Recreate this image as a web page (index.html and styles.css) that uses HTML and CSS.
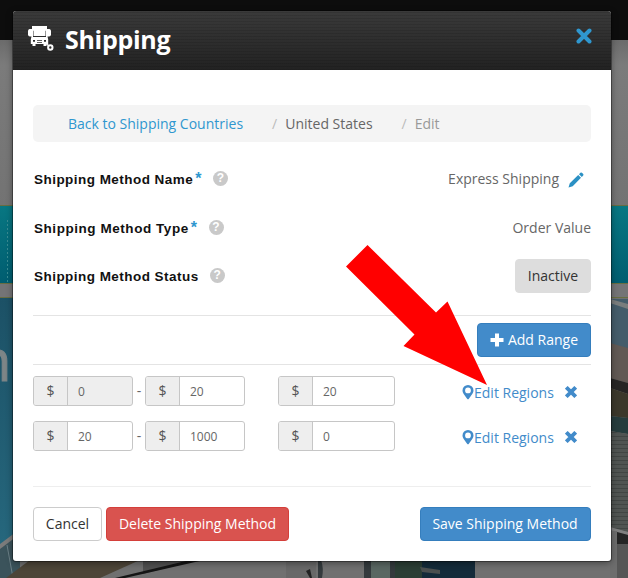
FILE: index.html
```html
<!DOCTYPE html>
<html lang="en">
<head>
<meta charset="utf-8">
<title>Shipping</title>
<link rel="stylesheet" href="styles.css">
</head>
<body>
<svg class="backdrop" width="628" height="578" viewBox="0 0 628 578" aria-hidden="true">
  <defs>
    <linearGradient id="wall" x1="0" y1="0" x2="0" y2="1"><stop offset="0" stop-color="#6b6b6b"/><stop offset=".15" stop-color="#7b7b7b"/><stop offset="1" stop-color="#737373"/></linearGradient>
    <linearGradient id="band" x1="0" y1="0" x2="0" y2="1"><stop offset="0" stop-color="#087782"/><stop offset="1" stop-color="#005d70"/></linearGradient>
    <linearGradient id="sign" x1="0" y1="0" x2="0" y2="1"><stop offset="0" stop-color="#1c5166"/><stop offset="1" stop-color="#276a80"/></linearGradient>
    <pattern id="slats" width="4" height="4" patternUnits="userSpaceOnUse"><path fill="#505452" d="M0 0h4v4H0z"/><path fill="#414543" d="M0 0h4v1H0z"/></pattern>
  </defs>
  <path fill="url(#wall)" d="M0 40h628v166H0z"/>
  <path fill="#0d0d0d" d="M0 0h628v40H0z"/>
  <path fill="url(#band)" d="M0 206h628v77H0z"/>
  <path fill="#686d42" d="M0 205h628v1H0zM0 283h628v1H0z"/>
  <path fill="#747476" d="M0 284h628v13H0z"/>
  <path stroke="#388b92" stroke-dasharray="2 2" d="M7.500 220v62"/>
  <path fill="url(#sign)" d="M0 298h20v280H0z"/>
  <path fill="#686d42" d="M0 297h628v1H0z"/>
  <text class="sign-letter" x="-24" y="381">n</text>
  <path fill="#3b535b" d="M0 548l20-16v46H0z"/>
  <path fill="#7b7b7b" d="M0 544l20-15v5L0 549z"/>
  <path stroke="#6c8188" d="M7 545l6 33"/>
  <path fill="#4d4538" d="M6 578l24-18h116v18z"/>
  <path fill="#707070" d="M140 560h488v18H100z"/>
  <path fill="#505050" d="M143 560h55l-55 14z"/>
  <path fill="#151515" d="M190 560h14l-79 18h-10z"/>
  <path fill="#686868" d="M286 560h30v18h-30z"/>
  <path fill="#343a3d" d="M318 560h3q3 8 1 18h-4zM364 560h7v18h-7zM390 560h5v18h-5z"/>
  <path fill="#596762" d="M371 560h19v18h-19z"/>
  <path fill="#2b3e35" d="M395 560h27v18h-27z"/>
  <path fill="#142b3a" d="M422 560h53v18h-53z"/>
  <path fill="#4b5050" d="M420 567l20 3v4l-18-2z"/>
  <path fill="#222" d="M306 571l4-2 2 9h-2z"/>
  <g>
    <path fill="#445c6a" d="M610 299h18v50h-18z"/>
    <path fill="#747476" d="M610 284h18v12h-18z"/>
    <path fill="#7a7d7d" d="M610 299l18 5v5l-18-6z"/>
    <path fill="#615954" d="M610 343l18 5v35l-18-5z"/>
    <path fill="#262524" d="M610 378l18 5v11l-18-6z"/>
    <path fill="#3b382b" d="M610 388l18 6v24l-18-2z"/>
    <path fill="#263c3d" d="M610 416l18 2v16l-18-3z"/>
    <path fill="url(#slats)" d="M610 431l18 3v98l-18-4z"/>
    <path fill="#808080" d="M610 527l18 5v3l-18-5z"/>
    <path fill="#252525" d="M617 532l11 3v9h-11z"/>
    <path fill="#6d6d6d" d="M610 531h7v47h-7z"/>
    <path fill="#565656" d="M617 544h11v34h-11z"/>
  </g>
</svg>

<main class="modal">
  <header class="modal-header">
    <svg class="truck" width="27" height="26" viewBox="0 0 27 26" aria-hidden="true">
      <path fill="#fff" fill-rule="evenodd" d="M4 0h15v3h2.500Q23 3.500 23 5v4q-.5 1.500-2.500 1.500h-1l.7 3V18h-1.700v2h-3v-2h-8v2h-3v-2H2.800v-4.500l.7-3h-1Q.5 10.500 0 9V5q0-1.500 1.500-2H4zM5 4.800V11h13V4.800zM5 14v1.800h2V14zm11 0v1.800h2V14zM9 14v.8h5V14zm0 2v.8h5V16z"/>
      <path fill="#fff" d="M5.500 4h12v6h-12z"/>
      <path stroke="#fff" stroke-width="1.400" d="M18 17.500l3 2.500"/>
      <circle cx="22.300" cy="21.500" r="2.200" fill="#2c2c2c" stroke="#fff" stroke-width="2"/>
    </svg>
    <h1>Shipping</h1>
    <svg class="close" width="16" height="16" viewBox="0 0 16 16" aria-label="Close"><path d="M2.500 2.500l11 11m0-11l-11 11" stroke="#2f97cf" stroke-width="4" stroke-linecap="round"/></svg>
  </header>
  <section class="modal-body">
    <nav class="breadcrumb"><a>Back to Shipping Countries</a><i>/</i><span>United States</span><i>/</i><em>Edit</em></nav>
    <div class="field name"><label>Shipping Method Name<b>*</b></label><span class="help">?</span><span class="value">Express Shipping</span>
      <svg class="pencil" width="16" height="16" viewBox="0 0 16 16" aria-hidden="true"><path fill="#2b91c4" d="M.5 15.500l1.300-4.300L10.200 3 13 5.800l-8.300 8.400zM11 2.200l1.400-1.400q.8-.6 1.500 0l1.300 1.300q.6.700 0 1.500L13.800 5z"/></svg>
    </div>
    <div class="field type"><label>Shipping Method Type<b>*</b></label><span class="help">?</span><span class="value">Order Value</span></div>
    <div class="field status"><label>Shipping Method Status</label><span class="help">?</span><button class="btn inactive">Inactive</button></div>
    <div class="add-row"><button class="btn primary add"><svg width="14" height="14" viewBox="0 0 14 14" aria-hidden="true"><path fill="#fff" d="M5 .5h4V5h4.500v4H9v4.500H5V9H.5V5H5z"/></svg>Add Range</button></div>
    <div class="range">
      <div class="group off"><span>$</span><div>0</div></div><span class="dash">-</span>
      <div class="group"><span>$</span><div>20</div></div>
      <div class="group price"><span>$</span><div>20</div></div>
      <a class="regions"><svg width="12" height="15" viewBox="0 0 12 15" aria-hidden="true"><path fill="#428bca" fill-rule="evenodd" d="M6 0a5.500 5.500 0 0 1 5.500 5.500c0 3-2.500 5-5 8.700h-1C3 10.500.5 8.500.5 5.500A5.500 5.500 0 0 1 6 0zm0 2.500a2.900 2.900 0 1 0 0 5.800 2.900 2.900 0 0 0 0-5.800z"/></svg>Edit Regions</a>
      <svg class="remove" width="12" height="12" viewBox="0 0 12 12" aria-hidden="true"><path stroke="#428bca" stroke-width="3.800" d="M1.300 1.300l9.400 9.400m0-9.400l-9.400 9.400"/></svg>
    </div>
    <div class="range">
      <div class="group"><span>$</span><div>20</div></div><span class="dash">-</span>
      <div class="group"><span>$</span><div>1000</div></div>
      <div class="group price"><span>$</span><div>0</div></div>
      <a class="regions"><svg width="12" height="15" viewBox="0 0 12 15" aria-hidden="true"><path fill="#428bca" fill-rule="evenodd" d="M6 0a5.500 5.500 0 0 1 5.500 5.500c0 3-2.500 5-5 8.700h-1C3 10.500.5 8.500.5 5.500A5.500 5.500 0 0 1 6 0zm0 2.500a2.900 2.900 0 1 0 0 5.800 2.900 2.900 0 0 0 0-5.800z"/></svg>Edit Regions</a>
      <svg class="remove" width="12" height="12" viewBox="0 0 12 12" aria-hidden="true"><path stroke="#428bca" stroke-width="3.800" d="M1.300 1.300l9.400 9.400m0-9.400l-9.400 9.400"/></svg>
    </div>
    <footer><button class="btn cancel">Cancel</button><button class="btn danger">Delete Shipping Method</button><button class="btn primary save">Save Shipping Method</button></footer>
  </section>
</main>
<svg class="pointer" width="142" height="142" viewBox="346 244 142 142" aria-hidden="true"><path fill="red" d="M367.500 245L436 312.500l11.500-11L487 385l-83.500-39 11-11.500L346 266.500z"/></svg>
</body>
</html>
```
FILE: styles.css
```css
* { box-sizing: border-box; }
body {
  margin: 0;
  width: 628px;
  height: 578px;
  overflow: hidden;
  position: relative;
  padding: 11px 17px 0 13px;
  background: #707070;
  font: 14px/20px "Open Sans", sans-serif;
  color: #666;
}
svg { display: block; flex: none; }
.backdrop { position: absolute; left: 0; top: 0; }
.sign-letter { font: 58px "Open Sans", sans-serif; fill: #7d8587; stroke: #7d8587; }
.modal {
  position: relative;
  width: 598px;
  height: 550px;
  border-radius: 3px;
  background: #fff;
  box-shadow: 0 0 0 1px rgba(0,0,0,.35), 0 2px 7px rgba(0,0,0,.4);
}
.modal-header {
  height: 59px;
  display: flex;
  align-items: flex-start;
  padding: 15px 19px 0 15px;
  border-radius: 3px 3px 0 0;
  background: repeating-linear-gradient(0deg, rgba(0,0,0,.1) 0 1px, transparent 1px 3px), linear-gradient(#3a3a3a, #222);
}
h1 { margin: -4px 0 0 10px; color: #fff; font-size: 25px; line-height: 34px; font-weight: 700; letter-spacing: -.3px; }
.close { margin: 2px 0 0 auto; }
.modal-body { padding: 35px 20px 0; }
.breadcrumb {
  display: flex;
  height: 37px;
  padding: 9px 35px 0;
  border-radius: 5px;
  background: #f4f4f4;
  white-space: nowrap;
}
.breadcrumb a { color: #2f97cf; }
.breadcrumb i { font-style: normal; color: #bbb; margin: 0 8px 0 29px; }
.breadcrumb em { font-style: normal; color: #999; }
.field { display: flex; align-items: center; height: 49px; padding-left: 1px; }
.name { margin-top: 12px; }
.status { height: 47px; }
label { margin-top: 2px; color: #111; font: bold 13.5px/20px "Liberation Sans", sans-serif; letter-spacing: .46px; white-space: nowrap; }
label b { color: #2f97cf; margin-left: 2px; font-size: 16px; line-height: 14px; }
.help {
  width: 15px;
  height: 15px;
  margin: -1px 0 0 11px;
  border-radius: 50%;
  background: #c9c9c9;
  color: #fff;
  font: bold 12px/15px "Liberation Sans", sans-serif;
  text-align: center;
}
.type label { letter-spacing: .55px; }
.value { margin-left: auto; white-space: nowrap; }
.pencil { margin: 2px 7px 0 9px; }
.btn {
  height: 34px;
  padding: 0 11px;
  border: 1px solid #ccc;
  border-radius: 4px;
  font: 14px/20px "Open Sans", sans-serif;
  color: #333;
  background: #fff;
  white-space: nowrap;
}
.inactive { margin-left: auto; width: 76px; background: #ddd; border-color: #ddd; }
.primary { color: #fff; background: #428bca; border-color: #357ebd; }
.danger { color: #fff; background: #d9534f; border-color: #d43f3a; }
.add-row {
  display: flex;
  align-items: center;
  justify-content: flex-end;
  height: 50px;
  margin: 16px 0 11px;
  border: solid #e4e4e4;
  border-width: 1px 0;
}
.add { display: flex; align-items: center; justify-content: center; gap: 4px; width: 114px; padding: 0; }
.range { display: flex; align-items: center; height: 30px; margin-bottom: 15px; }
.group { display: flex; width: 100px; height: 30px; border: 1px solid #c6c6c6; border-radius: 3px; font-size: 12px; line-height: 30px; overflow: hidden; }
.group span { width: 34px; border-right: 1px solid #c6c6c6; background: #eee; color: #555; font-size: 14px; line-height: 28px; text-align: center; }
.group div { padding-left: 10px; }
.off { background: #eee; }
.dash { width: 12px; text-align: center; line-height: 26px; }
.price { width: 117px; margin-left: 33px; }
.regions { display: flex; align-items: center; margin: 3px 0 0 66px; color: #428bca; white-space: nowrap; }
.regions svg { margin: -1px 0 0 1px; }
.remove { margin: 2px 0 0 11px; }
footer { display: flex; margin-top: 35px; padding-top: 20px; border-top: 1px solid #eee; }
.cancel { width: 69px; margin-right: 4px; }
.save { margin-left: auto; width: 171px; padding: 0 11px 0 10px; }
.danger { width: 183px; }
.pointer { position: absolute; left: 346px; top: 244px; }
```
